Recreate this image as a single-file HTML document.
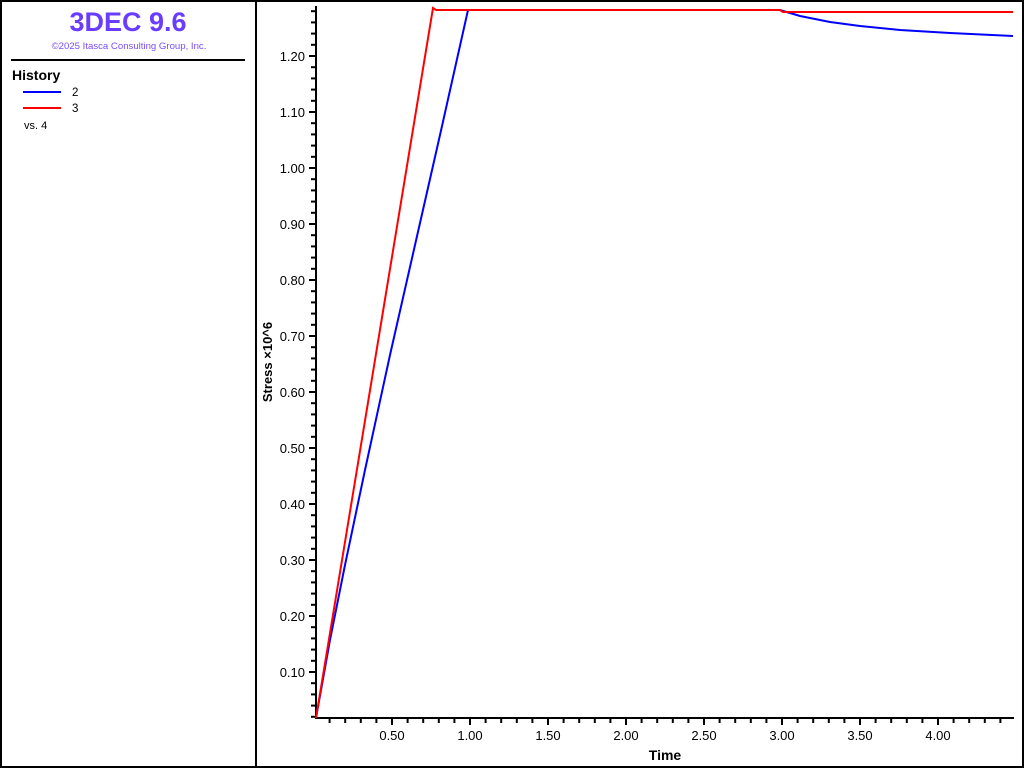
<!DOCTYPE html>
<html><head><meta charset="utf-8"><style>
html,body{margin:0;padding:0;background:#fff;}
body{width:1024px;height:768px;position:relative;overflow:hidden;font-family:"Liberation Sans",sans-serif;}
svg{position:absolute;left:0;top:0;}
</style></head><body>
<svg id="s" width="1024" height="768" xmlns="http://www.w3.org/2000/svg" font-family="Liberation Sans, sans-serif">
<rect x="1" y="1" width="1022" height="766" fill="#fff" stroke="#000" stroke-width="2"/>
<line x1="256" y1="0" x2="256" y2="768" stroke="#000" stroke-width="2"/>
<text x="128" y="31" text-anchor="middle" font-size="27" font-weight="bold" fill="#6a3cff">3DEC 9.6</text>
<text x="129" y="49" text-anchor="middle" font-size="9.6" fill="#7a4cff">©2025 Itasca Consulting Group, Inc.</text>
<line x1="11" y1="60" x2="245" y2="60" stroke="#000" stroke-width="2"/>
<text x="12" y="80" font-size="14" font-weight="bold">History</text>
<line x1="23" y1="92" x2="61" y2="92" stroke="#0000ff" stroke-width="2"/>
<text x="72" y="96" font-size="11.5">2</text>
<line x1="23" y1="108" x2="61" y2="108" stroke="#ff0000" stroke-width="2"/>
<text x="72" y="112" font-size="11.5">3</text>
<text x="24" y="129" font-size="11">vs. 4</text>
<g id="ax" stroke="#000" stroke-width="2"></g>
<g id="lb" font-size="13" fill="#000"></g>
<text x="665" y="760" text-anchor="middle" font-size="14" font-weight="bold">Time</text>
<text transform="translate(272,362) rotate(-90)" text-anchor="middle" font-size="13" font-weight="bold">Stress ×10^6</text>
<polyline fill="none" stroke="#0000ff" stroke-width="2" points="316,718 330,640 345,565 365,470 390,355 415,245 440,135 468,10 780,10 800,16 830,22 860,26 900,30 950,33 1013,36"/>
<polyline fill="none" stroke="#ff0000" stroke-width="2" points="316,718 433,8 436,10 780,10 783,12 1013,12"/>
</svg>
<script>
var ax=document.getElementById('ax'),lb=document.getElementById('lb'),N='http://www.w3.org/2000/svg';
function L(a,b,c,d){var e=document.createElementNS(N,'line');e.setAttribute('x1',a);e.setAttribute('y1',b);e.setAttribute('x2',c);e.setAttribute('y2',d);ax.appendChild(e);}
function T(x,y,t,anc){var e=document.createElementNS(N,'text');e.setAttribute('x',x);e.setAttribute('y',y);e.setAttribute('text-anchor',anc);e.textContent=t;lb.appendChild(e);}
L(316,6,316,719);L(315,718,1014,718);
for(var i=1;i<=64;i++){var v=i*0.02;var y=728-560*v;if(y<8)break;var maj=(i%5==0);L(maj?309:311,y,316,y);if(maj)T(305,y+5,(v).toFixed(2),'end');}
for(var i=1;i<=45;i++){var t=i*0.1;var x=314+156*t;if(x>1013)break;var maj=(i%5==0);L(x,718,x,maj?725:723);if(maj)T(x,740,t.toFixed(2),'middle');}
</script>
</body></html>
